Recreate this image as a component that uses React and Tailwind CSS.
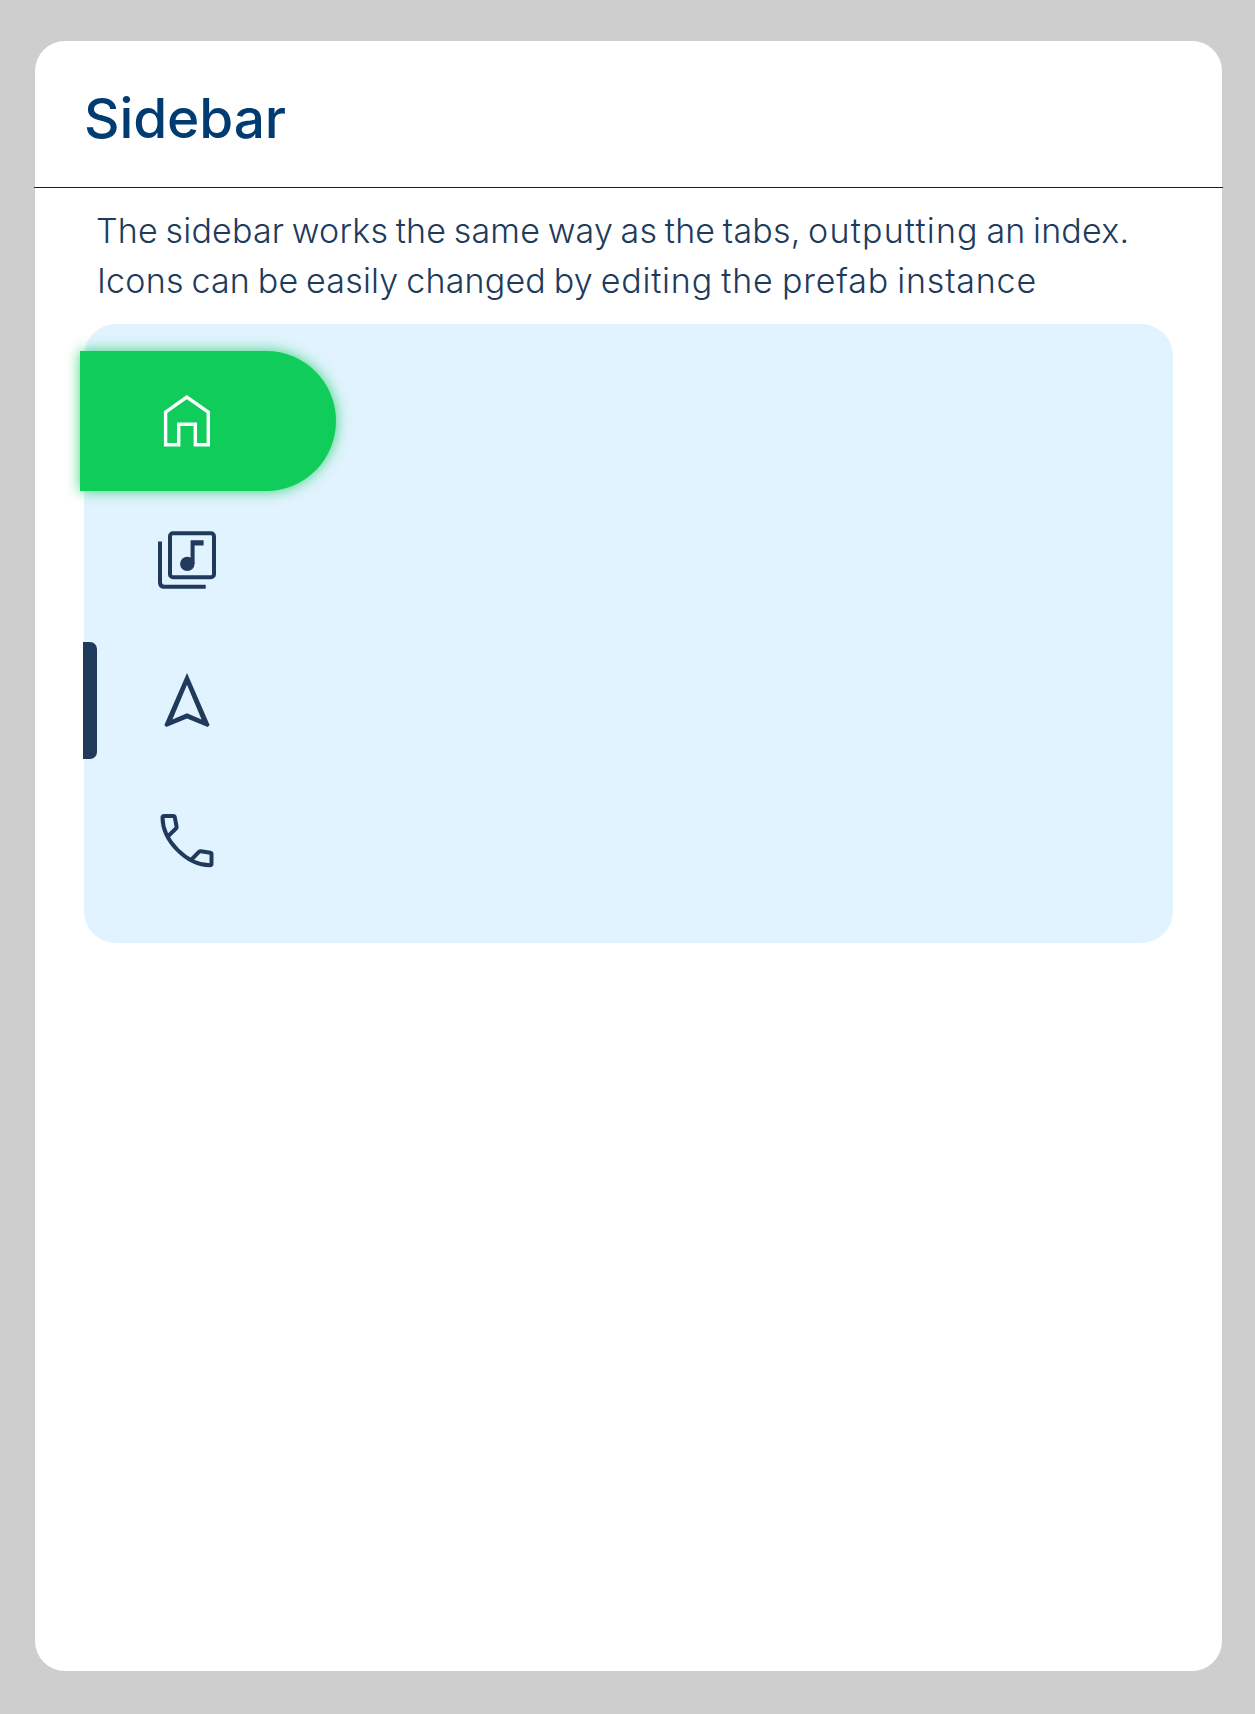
import React from "react";

function HomeIcon() {
  return (
    <svg width="70" height="70" viewBox="0 0 70 70" fill="none" stroke="#fff" strokeWidth="3.4">
      <path d="M13.600 58.700V26.200L34.800 11.200L56.300 26.200V58.700H43.300V38.300H26.700V58.700Z" />
    </svg>
  );
}

function MusicIcon() {
  return (
    <svg width="70" height="70" viewBox="0 0 70 70" fill="none" stroke="#203a5c" strokeWidth="4">
      <rect x="18" y="7.300" width="44" height="44" rx="3" />
      <path d="M8 15.500V56.500Q8 60.800 12.500 60.800H53.700" />
      <circle cx="35.300" cy="37.900" r="7.200" fill="#203a5c" stroke="none" />
      <path d="M38.600 38V14.300H51.600V19.500H42.600V38Z" fill="#203a5c" stroke="none" />
    </svg>
  );
}

function NavigateIcon() {
  return (
    <svg width="70" height="70" viewBox="0 0 24 24" fill="#203a5c">
      <path
        fillRule="evenodd"
        d="M12 2.400 4.250 20.200 4.900 20.900 12 18.000 19.100 20.900 19.750 20.200ZM12 6.400 17.000 18.300 12 16.200 7.000 18.300Z"
      />
    </svg>
  );
}

function PhoneIcon() {
  return (
    <svg width="70" height="70" viewBox="0 0 70 70" fill="none" stroke="#203a5c" strokeWidth="4" strokeLinejoin="round">
      <path d="M10.500 11.500Q10.500 10 12.300 10H21.200Q22.500 10 22.800 11.300L24.600 20.800Q24.800 21.800 24 22.500L16 30.200M10.500 11.500C10.700 35 35 59.300 58 59.300Q59.500 59.300 59.500 57.500V48.200Q59.500 47 58.300 46.800L48.800 45.200Q47.800 45.100 47.200 45.700L40 53" />
    </svg>
  );
}

function SidebarItem({ children }) {
  return <li className="flex h-[140px] w-[214px] items-center justify-center">{children}</li>;
}

export default function App() {
  return (
    <div className="h-[1714px] w-[1255px] bg-[#cecece] pt-[41px] pl-[34px] font-['Inter',sans-serif]">
      <main className="flex h-[1630px] w-[1189px] flex-col">
        <header className="mx-px flex h-[146px] shrink-0 items-center rounded-t-[30px] bg-white pt-2 pl-[49px]">
          <h1 className="text-[55px] leading-[60px] font-medium tracking-[-0.1px] whitespace-nowrap text-[#003c71]">Sidebar</h1>
        </header>
        <div className="h-px shrink-0 bg-[#1d1d24]" />
        <div className="mx-px flex-1 rounded-b-[30px] bg-white px-[49px] pt-[18px]">
          <div className="h-[118px] pl-3 text-[34px] leading-[50px] font-[330] whitespace-nowrap text-[#203a5c] [font-feature-settings:'calt'_0]">
            <p className="tracking-[0.2px] [word-spacing:-2.2px]">
              The sidebar works the same way as the tabs, <span className="tracking-[1.2px]">outputting</span> an index.
            </p>
            <p className="pl-px tracking-[0.2px] [word-spacing:-2px]">
              Icons can be easily changed by <span className="tracking-[0.8px]">editing the prefab instance</span>
            </p>
          </div>
          <section className="relative h-[619px] w-[1089px] rounded-[32px] bg-[#e1f3fe] pt-[27px]">
            <ul className="-ml-1">
              <li className="flex h-[140px] w-[256px] items-center rounded-r-[70px] bg-[#10cc5a] pl-[72px] shadow-[0_0_14px_#10cc5acc]">
                <HomeIcon />
              </li>
              <SidebarItem><MusicIcon /></SidebarItem>
              <SidebarItem><NavigateIcon /></SidebarItem>
              <SidebarItem><PhoneIcon /></SidebarItem>
            </ul>
            <span className="absolute top-[318px] -left-px h-[117px] w-[14px] rounded-r-[7px] bg-[#203a5c]" />
          </section>
        </div>
      </main>
    </div>
  );
}
